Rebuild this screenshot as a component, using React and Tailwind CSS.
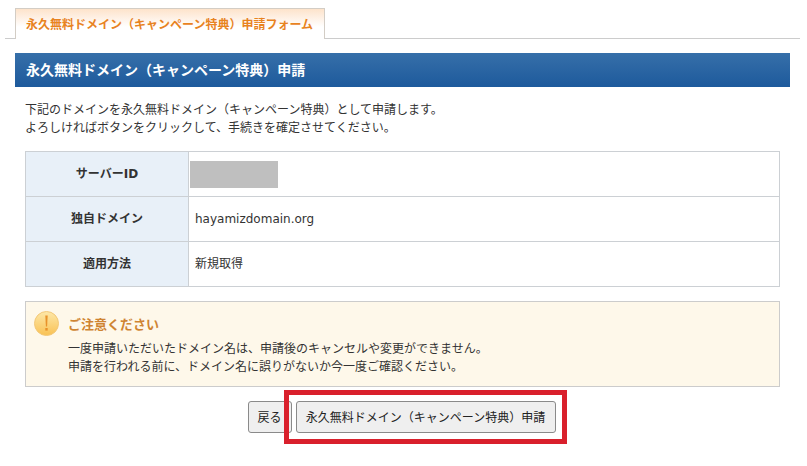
const FONT = "font-['Noto_Sans_CJK_JP','Noto_Sans',sans-serif]";
const LATIN = "font-['DejaVu_Sans','Noto_Sans_CJK_JP',sans-serif]";

const ROWS = [
  { label: "サーバーID", value: null },
  { label: "独自ドメイン", value: "hayamizdomain.org" },
  { label: "適用方法", value: "新規取得" },
];

export default function App() {
  return (
    <div className={`${FONT} relative h-[466px] w-[807px] overflow-hidden bg-white pt-2 text-xs text-[#333]`}>
      {/* tabs */}
      <div className="ml-[5px] mr-[7px] flex h-[31px] border-b border-[#ccc] pl-2.5">
        <div className="h-[31px] w-[310px] border border-b-0 border-[#d3cdc5] bg-gradient-to-b from-[#fde3cb] to-white to-60% pl-2.5 text-xs leading-[29px] font-bold text-[#e8831f]">
          永久無料ドメイン（キャンペーン特典）申請フォーム
        </div>
      </div>

      <div className="mx-[15px] mt-3.5 w-[775px]">
        <h1 className="h-[34px] bg-gradient-to-b from-[#366fa9] to-[#1d5a9c] pl-[11px] text-sm leading-[32px] font-bold text-white">
          永久無料ドメイン（キャンペーン特典）申請
        </h1>

        <div className="mx-2.5 mt-[13px] w-[755px]">
          <p className="leading-[18px]">
            下記のドメインを永久無料ドメイン（キャンペーン特典）として申請します。
            <br />
            よろしければボタンをクリックして、手続きを確定させてください。
          </p>

          <div className="mt-[15px] border border-[#ccd0d4]">
            {ROWS.map((row, i) => (
              <div key={row.label} className={i > 0 ? "flex h-[45px] border-t border-[#ccd0d4]" : "flex h-[44px]"}>
                <div className={`${LATIN} flex w-[163px] shrink-0 items-center justify-center border-r border-[#ccd0d4] bg-[#e8f0f8] font-bold`}>
                  {row.label}
                </div>
                {row.value ? (
                  <div className={`${LATIN} flex items-center pl-1.5`}>{row.value}</div>
                ) : (
                  <div className="mt-[9px] ml-px h-[27px] w-[88px] bg-[#bfbfbf]" />
                )}
              </div>
            ))}
          </div>

          <div className="mt-3.5 h-[86px] border border-[#ccc] bg-[#fef8ea] pt-[9px] pl-2">
            <div className="flex h-6 items-center gap-[9px]">
              <svg width="25" height="25" viewBox="0 0 25 25" className="shrink-0">
                <defs>
                  <linearGradient id="warn" x1="0" y1="0" x2="0" y2="1">
                    <stop offset="0" stopColor="#fde7a8" />
                    <stop offset="1" stopColor="#f9c254" />
                  </linearGradient>
                </defs>
                <circle cx="12.5" cy="12.5" r="12" fill="url(#warn)" stroke="#f3c878" strokeWidth="1" />
                <path d="M11.3 4.5h2.4l-.6 11h-1.2z" fill="#e8922a" />
                <rect x="11.3" y="17" width="2.4" height="2.6" fill="#e8922a" />
              </svg>
              <span className="pt-0.5 text-[13px] font-bold text-[#cf8432]">ご注意ください</span>
            </div>
            <p className="mt-1 ml-[34px] leading-[18px]">
              一度申請いただいたドメイン名は、申請後のキャンセルや変更ができません。
              <br />
              申請を行われる前に、ドメイン名に誤りがないか今一度ご確認ください。
            </p>
          </div>

          <div className="mt-3.5 flex justify-center gap-1 pr-[2px]">
            <button className="h-8 w-11 rounded-[3px] border border-[#8a8a8a] bg-[#efefef] text-xs text-[#222]">戻る</button>
            <button className="h-8 w-[260px] rounded-[3px] border border-[#8a8a8a] bg-[#efefef] text-xs text-[#222]">
              永久無料ドメイン（キャンペーン特典）申請
            </button>
          </div>
        </div>
      </div>

      {/* red annotation box */}
      <div className="absolute top-[390px] left-[284px] h-[54px] w-[283px] border-[5px] border-[#d9202c]" />
    </div>
  );
}
